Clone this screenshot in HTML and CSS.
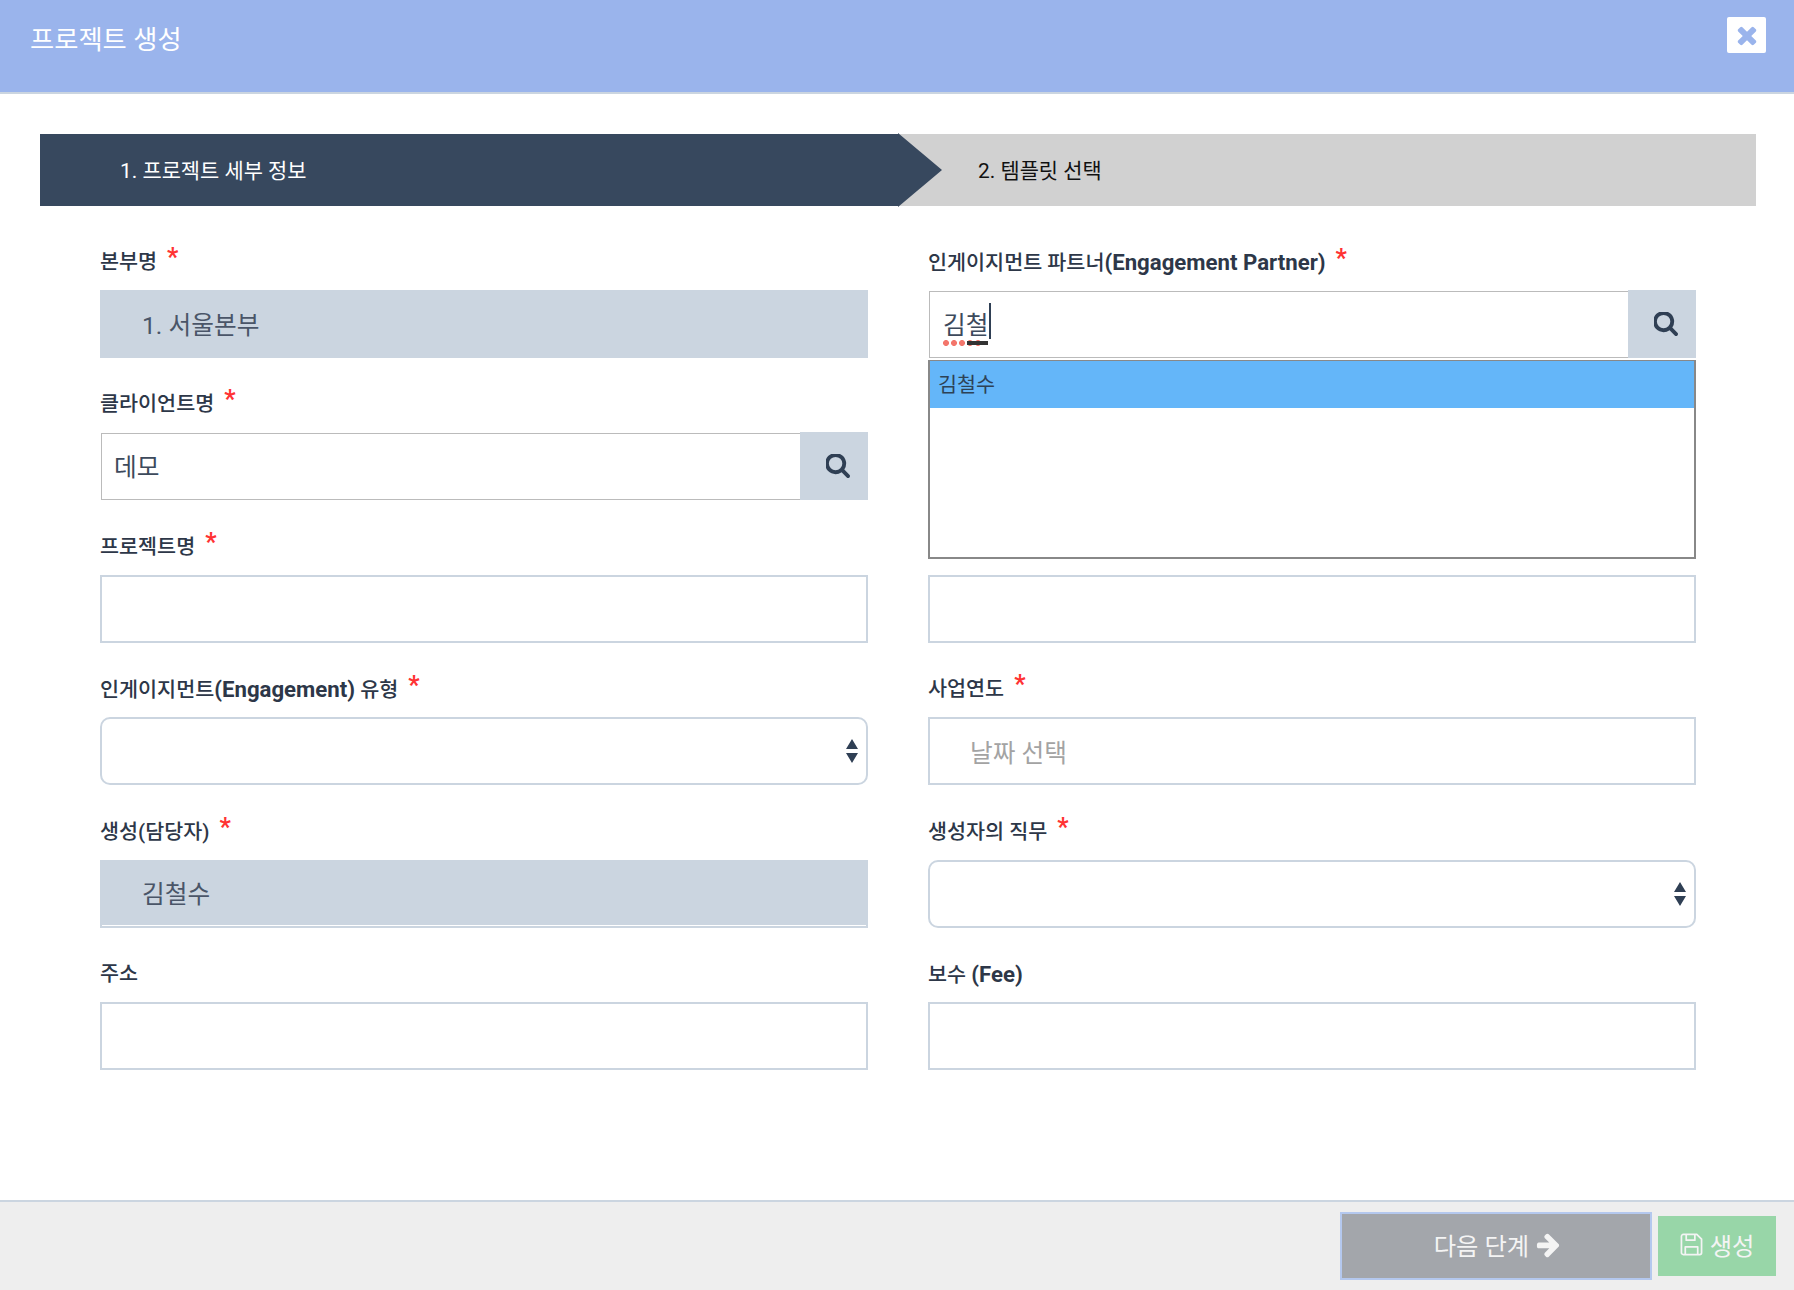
FILE: index.html
```html
<!DOCTYPE html>
<html lang="ko">
<head>
<meta charset="utf-8">
<title>프로젝트 생성</title>
<link rel="stylesheet" href="styles.css">
</head>
<body>
<div class="modal">
  <header class="modal-header">
    <h1 class="modal-title">프로젝트 생성</h1>
    <div class="close-btn">
      <svg class="close-icon" viewBox="0 0 1792 1792"><path d="M1490 1322q0 40-28 68l-136 136q-28 28-68 28t-68-28l-294-294-294 294q-28 28-68 28t-68-28l-136-136q-28-28-28-68t28-68l294-294-294-294q-28-28-28-68t28-68l136-136q28-28 68-28t68 28l294 294 294-294q28-28 68-28t68 28l136 136q28 28 28 68t-28 68l-294 294 294 294q28 28 28 68z"/></svg>
    </div>
  </header>

  <main class="modal-body">
    <div class="steps">
      <div class="step step-active">1. 프로젝트 세부 정보</div>
      <div class="step step-next">2. 템플릿 선택</div>
    </div>

    <div class="form-grid">
      <div class="field">
        <div class="label">본부명<span class="req">*</span></div>
        <div class="control readonly">1. 서울본부</div>
      </div>
      <div class="field">
        <div class="label">인게이지먼트 파트너<b class="latin">(Engagement Partner)</b><span class="req">*</span></div>
        <div class="search-wrap">
          <div class="search-group">
            <div class="search-input typing">
              <span class="typed">김철<span class="spell"></span><span class="ime"></span><span class="caret"></span></span>
            </div>
            <div class="search-btn">
              <svg class="search-icon" viewBox="128 192 1600 1600"><path d="M1216 832q0-185-131.500-316.500t-316.500-131.500-316.500 131.500-131.500 316.500 131.500 316.500 316.500 131.500 316.500-131.500 131.500-316.500zm512 832q0 52-38 90t-90 38q-54 0-90-38l-343-342q-179 124-399 124-143 0-273.500-55.500t-225-150-150-225-55.500-273.500 55.500-273.500 150-225 225-150 273.500-55.500 273.500 55.500 225 150 150 225 55.500 273.500q0 220-124 399l343 343q37 37 37 90z"/></svg>
            </div>
          </div>
          <div class="dropdown">
            <div class="dropdown-item">김철수</div>
          </div>
        </div>
      </div>

      <div class="field">
        <div class="label">클라이언트명<span class="req">*</span></div>
        <div class="search-group">
          <div class="search-input">데모</div>
          <div class="search-btn">
            <svg class="search-icon" viewBox="128 192 1600 1600"><path d="M1216 832q0-185-131.500-316.500t-316.500-131.500-316.500 131.500-131.500 316.500 131.500 316.500 316.500 131.500 316.500-131.500 131.500-316.500zm512 832q0 52-38 90t-90 38q-54 0-90-38l-343-342q-179 124-399 124-143 0-273.500-55.500t-225-150-150-225-55.500-273.500 55.500-273.500 150-225 225-150 273.500-55.500 273.500 55.500 225 150 150 225 55.500 273.500q0 220-124 399l343 343q37 37 37 90z"/></svg>
          </div>
        </div>
      </div>
      <div class="field">
        <div class="label"></div>
        <div class="control"></div>
      </div>

      <div class="field">
        <div class="label">프로젝트명<span class="req">*</span></div>
        <div class="control"></div>
      </div>
      <div class="field">
        <div class="label"></div>
        <div class="control"></div>
      </div>

      <div class="field">
        <div class="label">인게이지먼트<b class="latin">(Engagement)</b> 유형<span class="req">*</span></div>
        <div class="control select">
          <svg class="select-arrows" viewBox="0 0 12 24"><path d="M6 0l6 10H0zM0 14h12L6 24z"/></svg>
        </div>
      </div>
      <div class="field">
        <div class="label">사업연도<span class="req">*</span></div>
        <div class="control placeholder">날짜 선택</div>
      </div>

      <div class="field">
        <div class="label">생성(담당자)<span class="req">*</span></div>
        <div class="control readonly readonly-line">김철수</div>
      </div>
      <div class="field">
        <div class="label">생성자의 직무<span class="req">*</span></div>
        <div class="control select">
          <svg class="select-arrows" viewBox="0 0 12 24"><path d="M6 0l6 10H0zM0 14h12L6 24z"/></svg>
        </div>
      </div>

      <div class="field">
        <div class="label">주소</div>
        <div class="control"></div>
      </div>
      <div class="field">
        <div class="label">보수 <b class="latin">(Fee)</b></div>
        <div class="control"></div>
      </div>
    </div>
  </main>

  <footer class="modal-footer">
    <div class="btn btn-next">다음 단계
      <svg class="arrow-icon" viewBox="0 0 1792 1792"><path d="M1600 960q0 54-37 91l-651 651q-39 37-91 37-51 0-90-37l-75-75q-38-38-38-91t38-91l293-293h-704q-52 0-84.500-37.500t-32.500-90.500v-128q0-53 32.500-90.500t84.500-37.500h704l-293-294q-38-36-38-90t38-90l75-75q38-38 90-38 53 0 91 38l651 651q37 35 37 90z"/></svg>
    </div>
    <div class="btn btn-create">
      <svg class="save-icon" viewBox="0 0 24 24"><path d="M3.500 1.500h14l5 5v14a2 2 0 0 1-2 2h-17a2 2 0 0 1-2-2v-17a2 2 0 0 1 2-2z"/><path d="M6.500 1.500v6h9v-6"/><path d="M5.500 22.500v-8h13v8"/></svg>
      생성
    </div>
  </footer>
</div>
</body>
</html>
```
FILE: styles.css
```css
* { box-sizing: border-box; }
html, body { margin: 0; padding: 0; height: 100%; background: #fff; }
body {
  font-family: Roboto, "Noto Sans CJK KR", sans-serif;
  color: #2d3748;
}
.modal { display: flex; flex-direction: column; height: 1290px; }

.modal-header {
  height: 94px;
  flex: none;
  background: #9ab4ec;
  border-bottom: 2px solid #cbd5e0;
  display: flex;
  justify-content: space-between;
  align-items: flex-start;
  padding: 17px 28px 0 30px;
}
.modal-title {
  margin: 2px 0 0;
  font-size: 26.300px;
  font-weight: 400;
  line-height: 42px;
  color: #fff;
}
.close-btn {
  width: 39px;
  height: 36px;
  background: #fff;
  border-radius: 2px;
  display: flex;
  align-items: center;
  justify-content: center;
}
.close-icon { width: 28px; height: 28px; fill: #9ab4ec; }

.modal-body { flex: 1; padding: 40px 38px 0 40px; }

.steps { display: flex; height: 72px; }
.step {
  display: flex;
  align-items: center;
  padding: 0 0 3px 80px;
  font-size: 20.900px;
}
.step-active {
  width: 858px;
  flex: none;
  background: #37485e;
  color: #fff;
  position: relative;
}
.step-active::after {
  content: "";
  position: absolute;
  left: 100%;
  top: -1px;
  border-style: solid;
  border-width: 37px 0 37px 44px;
  border-color: transparent transparent transparent #37485e;
}
.step-next { flex: 1; background: #d1d1d1; color: #111; }

.form-grid {
  display: grid;
  grid-template-columns: 1fr 1fr;
  column-gap: 60px;
  row-gap: 27.4px;
  padding: 37px 60px 0;
}
.label {
  height: 36px;
  line-height: 39px;
  margin-bottom: 11px;
  font-size: 20.700px;
  font-weight: 500;
  color: #2d3748;
  white-space: nowrap;
}
.latin { font-size: 22.200px; font-weight: 700; }
.req {
  margin-left: 10px;
  font-size: 25px;
  font-weight: 700;
  line-height: 0;
  color: #f33;
  vertical-align: 3px;
}

.control {
  height: 68px;
  border: 2px solid #cbd5e0;
  background: #fff;
  font-size: 24.700px;
  display: flex;
  align-items: center;
  padding: 0 0 3px 40px;
  color: #4a5568;
}
.readonly { background: #cbd5e0; }
.readonly-line { box-shadow: inset 0 -1px 0 #fff; }
.placeholder { color: #a3a3a3; padding-bottom: 1px; }
.select { border-radius: 10px; justify-content: flex-end; padding: 0 8px 0 0; }
.select-arrows { width: 12px; height: 24px; fill: #2f3f54; }

.search-wrap { position: relative; }
.search-group { display: flex; height: 68px; }
.search-input {
  flex: 1;
  margin: 1px 0 0 1px;
  border: 1px solid #bbb;
  border-right: none;
  display: flex;
  align-items: center;
  padding: 0 0 3px 12px;
  font-size: 24.700px;
  color: #3d4a5c;
  background: #fff;
}
.search-input.typing { padding-left: 13px; }
.search-btn {
  width: 68px;
  flex: none;
  background: #cbd5e0;
  display: flex;
  align-items: center;
  justify-content: center;
  padding-left: 8px;
}
.search-icon { width: 24px; height: 24px; fill: #2f3f54; }

.typed { position: relative; }
.caret {
  position: absolute;
  left: calc(100% + 1px);
  top: -2px;
  width: 2px;
  height: 36px;
  background: #2f3f54;
}
.ime {
  position: absolute;
  left: 24px;
  right: 0;
  bottom: -4px;
  height: 4px;
  background: #333;
}
.spell {
  position: absolute;
  left: 0;
  width: 40px;
  bottom: -5px;
  height: 6px;
  background-image: radial-gradient(circle 3px at 3px 3px, #f3766c 95%, transparent 100%);
  background-size: 8px 6px;
}

.dropdown {
  position: absolute;
  z-index: 5;
  left: 0;
  right: 0;
  top: 70px;
  height: 199px;
  background: #fff;
  border: 2px solid #888;
  border-top-width: 1px;
}
.dropdown-item {
  height: 47px;
  background: #64b6f9;
  display: flex;
  align-items: center;
  padding: 0 0 3px 8px;
  font-size: 20.700px;
  color: #2d4256;
}

.modal-footer {
  flex: none;
  height: 90px;
  background: #eee;
  border-top: 2px solid #cbd5e0;
  display: flex;
  justify-content: flex-end;
  align-items: center;
  gap: 6px;
  padding-right: 18px;
}
.btn {
  display: flex;
  align-items: center;
  justify-content: center;
  font-size: 24.300px;
  color: #f4f4f4;
  padding-bottom: 3px;
}
.btn-next {
  width: 312px;
  height: 68px;
  background: #a3a6ab;
  border: 2px solid #b4c8ee;
  gap: 6px;
  padding-left: 4px;
}
.btn-create {
  width: 118px;
  height: 60px;
  background: #98d6a8;
  gap: 7px;
}
.arrow-icon { width: 27px; height: 27px; fill: #f4f4f4; }
.save-icon { width: 23px; height: 23px; fill: none; stroke: #f4f4f4; stroke-width: 1.800; stroke-linejoin: round; }
```
